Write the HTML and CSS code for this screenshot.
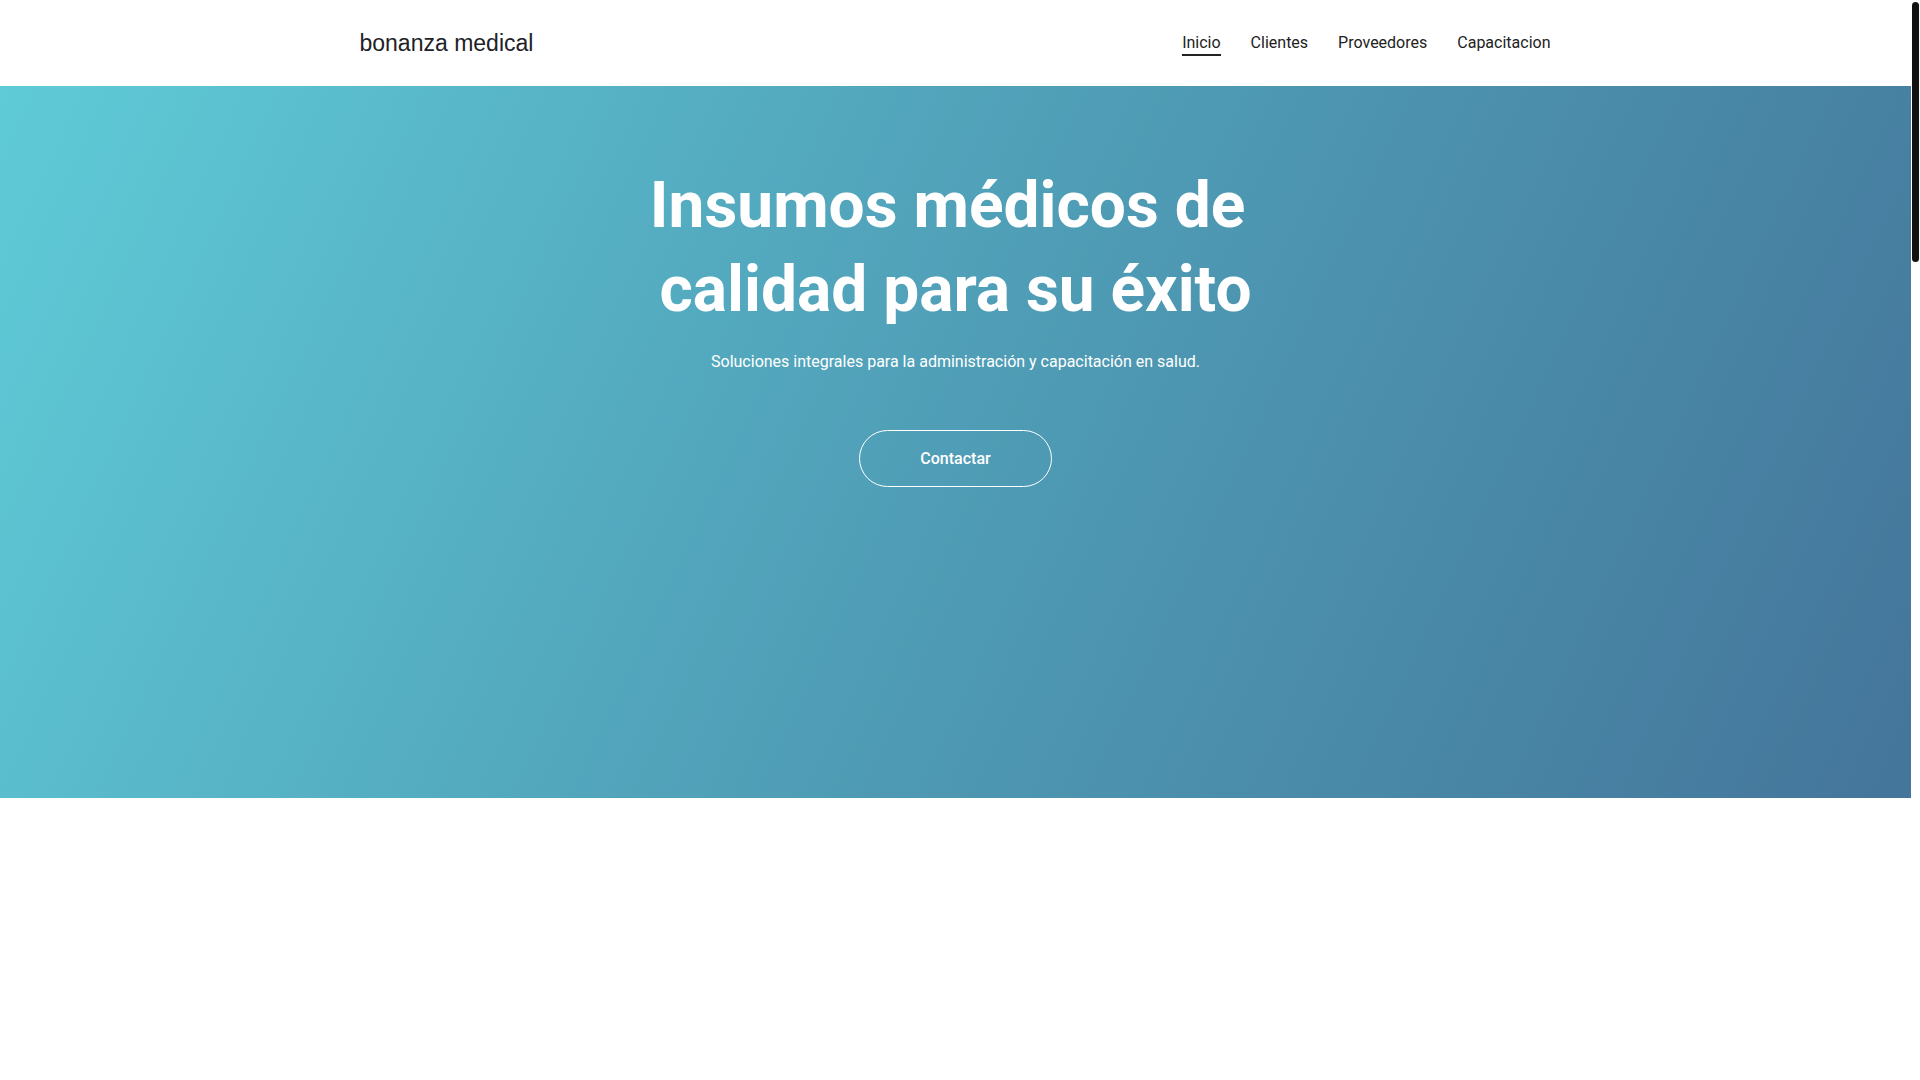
FILE: index.html
```html
<!DOCTYPE html>
<html lang="es">
<head>
<meta charset="utf-8">
<title>bonanza medical</title>
<link rel="stylesheet" href="styles.css">
</head>
<body>
<div class="page">
  <header class="site-header">
    <div class="container header-inner">
      <a class="logo" href="#">bonanza medical</a>
      <nav class="main-nav">
        <a class="nav-link active" href="#">Inicio</a>
        <a class="nav-link" href="#">Clientes</a>
        <a class="nav-link" href="#">Proveedores</a>
        <a class="nav-link" href="#">Capacitacion</a>
      </nav>
    </div>
  </header>
  <section class="hero">
    <h1 class="hero-title">Insumos médicos de&nbsp;<br>calidad para su éxito</h1>
    <p class="hero-sub">Soluciones integrales para la administración y capacitación en salud.</p>
    <a class="btn-outline" href="#">Contactar</a>
  </section>
  <section class="below"></section>
</div>
<div class="scroll-rail"><div class="scroll-thumb"></div></div>
</body>
</html>
```

FILE: styles.css
```css
* { box-sizing: border-box; }
html, body { height: 100%; overflow: hidden; }
body {
  margin: 0;
  font-family: Roboto, "Liberation Sans", Arial, sans-serif;
  color: #222;
  background: #fff;
  display: flex;
}
a { text-decoration: none; color: inherit; }

.page { flex: 1; min-width: 0; }
.scroll-rail {
  width: 9px;
  flex: none;
  background: #fff;
  padding: 2px 1px 0 1px;
}
.scroll-thumb {
  height: 260px;
  background: #111;
  border-radius: 4px;
}

.container {
  max-width: 1200px;
  margin: 0 auto;
  padding: 0 4px;
}
.site-header { background: #fff; }
.header-inner {
  height: 86px;
  display: flex;
  align-items: center;
  justify-content: space-between;
}
.logo {
  font-family: "Liberation Sans", Arial, sans-serif;
  font-size: 23px;
  color: #1e2227;
}
.main-nav {
  display: flex;
  gap: 30px;
  margin-top: 3px;
  margin-right: 1px;
}
.nav-link {
  font-size: 16px;
  color: #222;
  padding-bottom: 2px;
  border-bottom: 2px solid transparent;
}
.nav-link.active { border-bottom-color: #222; }

.hero {
  height: 712px;
  background: linear-gradient(115deg, #5fcbd7 0%, #4f9db6 50%, #44759a 100%);
  display: flex;
  flex-direction: column;
  align-items: center;
  color: #fff;
  text-align: center;
  padding-top: 78px;
}
.hero-title {
  margin: 0;
  font-size: 64px;
  font-weight: 700;
  line-height: 84px;
}
.hero-sub {
  margin: 20px 0 0;
  font-size: 16px;
  line-height: 20px;
}
.btn-outline {
  margin-top: 58px;
  display: inline-block;
  padding: 18px 60px;
  font-size: 16px;
  line-height: 19px;
  font-weight: 500;
  border: 1px solid #fff;
  border-radius: 30px;
  color: #fff;
}
.below { height: 282px; background: #fff; }
```
